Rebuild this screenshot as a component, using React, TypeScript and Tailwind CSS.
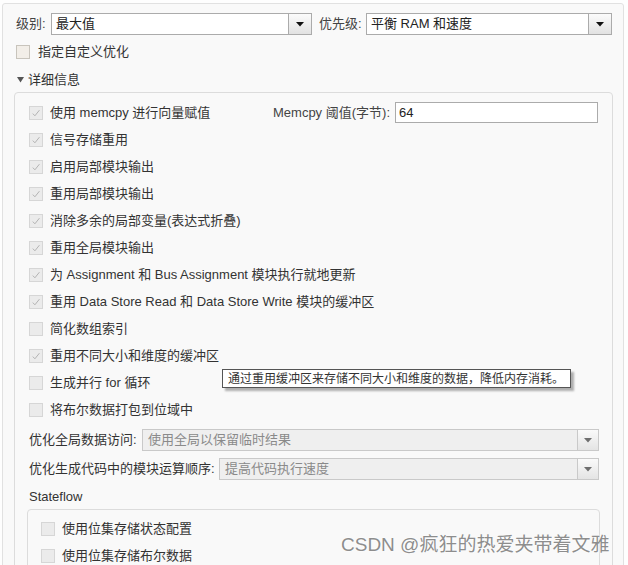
import React from "react";

function Check({ checked = false }: { checked?: boolean }) {
  return (
    <span className="w-[14px] h-[14px] border border-[#d6d6d6] bg-[#ebebeb] flex items-center justify-center shrink-0">
      {checked && (
        <svg width="10" height="10" viewBox="0 0 10 10">
          <path d="M1.8 5.6 L3.9 7.8 L8.4 2.2" stroke="#b3b3b3" strokeWidth="1" fill="none" />
        </svg>
      )}
    </span>
  );
}

function Arrow({ color }: { color: string }) {
  return (
    <svg width="8" height="5" viewBox="0 0 8 5">
      <path d="M0 0 L8 0 L4 4.5 Z" fill={color} />
    </svg>
  );
}

function Select({ text, className, disabled = false }: { text: string; className: string; disabled?: boolean }) {
  if (disabled) {
    return (
      <div className={`h-[22px] border border-[#c9c9c9] bg-[#efefef] flex ${className}`}>
        <div className="flex-1 pl-[5px] flex items-center text-[13px] text-[#8a8a8a] whitespace-nowrap">{text}</div>
        <div className="w-[21px] border-l border-[#c9c9c9] bg-linear-to-b from-[#fafafa] to-[#e4e4e4] flex items-center justify-center">
          <Arrow color="#6e6e6e" />
        </div>
      </div>
    );
  }
  return (
    <div className={`h-[22px] border border-[#ababab] bg-white flex ${className}`}>
      <div className="flex-1 pl-[4px] flex items-center text-[13px] text-[#222] whitespace-nowrap">{text}</div>
      <div className="w-[23px] border-l border-[#ababab] bg-linear-to-b from-[#fbfbfb] to-[#e2e2e2] flex items-center justify-center">
        <Arrow color="#111" />
      </div>
    </div>
  );
}

const rows: { label: string; checked: boolean }[] = [
  { label: "信号存储重用", checked: true },
  { label: "启用局部模块输出", checked: true },
  { label: "重用局部模块输出", checked: true },
  { label: "消除多余的局部变量(表达式折叠)", checked: true },
  { label: "重用全局模块输出", checked: true },
  { label: "为 Assignment 和 Bus Assignment 模块执行就地更新", checked: true },
  { label: "重用 Data Store Read 和 Data Store Write 模块的缓冲区", checked: true },
  { label: "简化数组索引", checked: false },
  { label: "重用不同大小和维度的缓冲区", checked: true },
  { label: "生成并行 for 循环", checked: false },
  { label: "将布尔数据打包到位域中", checked: false },
];

export default function App() {
  return (
    <div className="relative w-[628px] h-[565px] overflow-hidden bg-[#fefefe] text-[13px] text-[#333] font-['Liberation_Sans','Noto_Sans_CJK_SC',sans-serif]">
      <div className="absolute left-[2px] top-[3px] w-[622px] h-[600px] border border-[#e1e1e1] rounded-[3px] bg-[#f9f9f9]">
        {/* top row */}
        <div className="flex items-center mt-[9px] ml-[13px] h-[22px]">
          <span className="w-[35px] text-[#444]">级别:</span>
          <Select text="最大值" className="w-[261px]" />
          <span className="ml-[7px] w-[47px] text-[#444]">优先级:</span>
          <Select text="平衡 RAM 和速度" className="w-[246px]" />
        </div>
        <div className="flex items-center mt-[10px] ml-[13px] h-[14px]">
          <span className="w-[14px] h-[14px] border border-[#c8c4bc] bg-[#f2eee8] shrink-0" />
          <span className="ml-[8px]">指定自定义优化</span>
        </div>
        <div className="flex items-center mt-[13px] ml-[14px] h-[16px]">
          <svg width="7" height="6" viewBox="0 0 7 6">
            <path d="M0 0 L7 0 L3.5 5.5 Z" fill="#555" />
          </svg>
          <span className="ml-[4px]">详细信息</span>
        </div>
        {/* inner panel */}
        <div className="mt-[4px] ml-[11px] w-[599px] h-[520px] border border-[#dcdcdc] rounded-[4px] bg-[#f9f9f9]">
          <div className="pt-[6px] pl-[14px]">
            <div className="h-[27px] flex items-center">
              <div className="w-[244px] flex items-center">
                <Check checked />
                <span className="ml-[7px]">使用 memcpy 进行向量赋值</span>
              </div>
              <span className="w-[122px] text-[#444]">Memcpy 阈值(字节):</span>
              <div className="w-[203px] h-[21px] border border-[#ababab] bg-white flex items-center pl-[3px] text-[#222]">64</div>
            </div>
            {rows.map((r) => (
              <div key={r.label} className="h-[27px] flex items-center">
                <Check checked={r.checked} />
                <span className="ml-[7px] whitespace-nowrap">{r.label}</span>
              </div>
            ))}
          </div>
          <div className="pl-[14px] pr-[13px] mt-[6px] flex flex-col gap-[7px]">
            <div className="flex items-center h-[22px]">
              <span className="w-[113px] whitespace-nowrap">优化全局数据访问:</span>
              <Select text="使用全局以保留临时结果" className="flex-1" disabled />
            </div>
            <div className="flex items-center h-[22px]">
              <span className="w-[190px] whitespace-nowrap">优化生成代码中的模块运算顺序:</span>
              <Select text="提高代码执行速度" className="flex-1" disabled />
            </div>
          </div>
          <div className="ml-[14px] mt-[9px] h-[16px] flex items-center">Stateflow</div>
          <div className="ml-[12px] mr-[12px] mt-[4px] h-[120px] border border-[#dcdcdc] rounded-[4px] pt-[5px] pl-[13px]">
            <div className="h-[27px] flex items-center">
              <Check />
              <span className="ml-[7px]">使用位集存储状态配置</span>
            </div>
            <div className="h-[27px] flex items-center">
              <Check />
              <span className="ml-[7px]">使用位集存储布尔数据</span>
            </div>
          </div>
        </div>
      </div>
      {/* tooltip */}
      <div className="absolute left-[222px] top-[369px] w-[349px] h-[19px] border border-[#555] bg-white shadow-[3px_3px_2px_rgba(0,0,0,0.3)] flex items-center pl-[5px] text-[12px] text-[#333] whitespace-nowrap">
        通过重用缓冲区来存储不同大小和维度的数据，降低内存消耗。
      </div>
      {/* watermark */}
      <div className="absolute left-[341px] top-[533px] text-[19px] leading-[24px] text-[#8d8d8d] whitespace-nowrap [text-shadow:0_0_2px_#fff,0_0_2px_#fff]">
        CSDN @疯狂的热爱夹带着文雅
      </div>
    </div>
  );
}
